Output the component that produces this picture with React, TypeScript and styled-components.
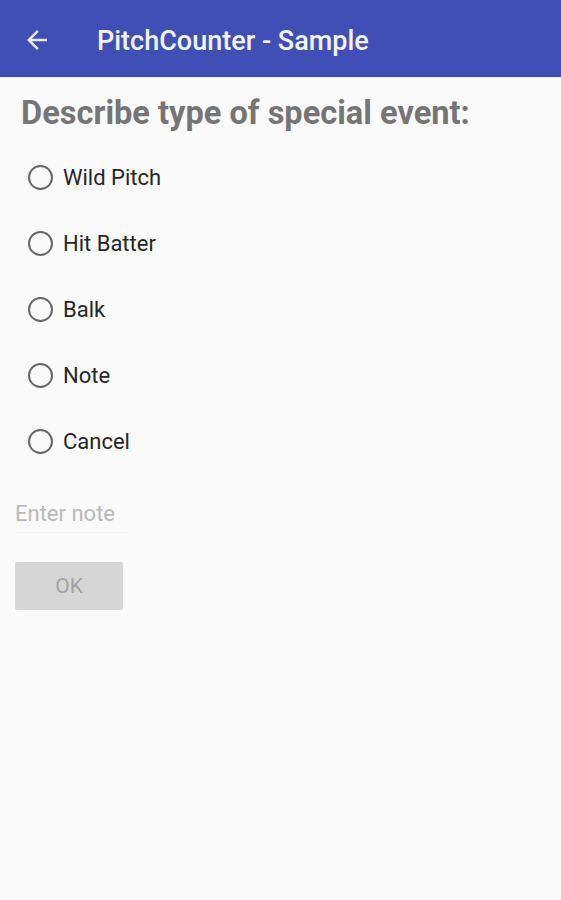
import { useState } from 'react'
import styled, { createGlobalStyle } from 'styled-components'

const GlobalStyle = createGlobalStyle`
  html, body {
    margin: 0;
    padding: 0;
    background: #fafafa;
    font-family: Roboto, "Noto Sans", sans-serif;
  }
`

const options = ['Wild Pitch', 'Hit Batter', 'Balk', 'Note', 'Cancel']

export default function App() {
  const [selected, setSelected] = useState<string | null>(null)
  const [note, setNote] = useState('')

  return (
    <Page>
      <GlobalStyle />
      <AppBar>
        <BackButton type="button" aria-label="back">
          <svg viewBox="0 0 24 24">
            <path d="M20 11H7.83l5.59-5.59L12 4l-8 8 8 8 1.41-1.41L7.83 13H20v-2z" fill="#e8eaf6" />
          </svg>
        </BackButton>
        <Title>PitchCounter - Sample</Title>
      </AppBar>
      <Content>
        <Heading>Describe type of special event:</Heading>
        <RadioList>
          {options.map((o) => (
            <RadioRow key={o} onClick={() => setSelected(o)}>
              <RadioCircle checked={selected === o} />
              <RadioLabel>{o}</RadioLabel>
            </RadioRow>
          ))}
        </RadioList>
        <NoteInput
          placeholder="Enter note"
          value={note}
          onChange={(e) => setNote(e.target.value)}
        />
        <OkButton type="button" disabled>
          OK
        </OkButton>
      </Content>
    </Page>
  )
}

const Page = styled.div`
  min-height: 900px;
  background: #fafafa;
`

const AppBar = styled.div`
  height: 77px;
  background: #3f4fb5;
  display: flex;
  align-items: center;
  padding-left: 22px;
  box-sizing: border-box;
`

const BackButton = styled.button`
  border: none;
  background: none;
  padding: 0;
  width: 30px;
  height: 30px;
  display: flex;
  align-items: center;
  justify-content: center;
  margin-right: 45px;
  margin-top: 2px;
  svg {
    width: 30px;
    height: 30px;
  }
`

const Title = styled.div`
  color: #f3f4fb;
  font-size: 27px;
  font-weight: 500;
  margin-top: 5px;
`

const Content = styled.div`
  padding-top: 12px;
`

const Heading = styled.div`
  color: #757575;
  font-size: 32.6px;
  font-weight: 700;
  margin-left: 21px;
  line-height: 48px;
`

const RadioList = styled.div`
  display: flex;
  flex-direction: column;
  margin-top: 7px;
  padding-left: 28px;
`

const RadioRow = styled.div`
  display: flex;
  align-items: center;
  height: 66px;
  cursor: pointer;
`

const RadioCircle = styled.span<{ checked: boolean }>`
  width: 21px;
  height: 21px;
  border-radius: 50%;
  border: 2.5px solid ${(p) => (p.checked ? '#3f51b5' : '#676767')};
  box-shadow: inset 0 0 0 ${(p) => (p.checked ? '4px #fafafa' : '0 transparent')};
  background: ${(p) => (p.checked ? '#3f51b5' : 'transparent')};
  flex-shrink: 0;
`

const RadioLabel = styled.span`
  margin-left: 10px;
  font-size: 22px;
  color: #262626;
`

const NoteInput = styled.input`
  display: block;
  margin: 25px 0 0 15px;
  width: 112px;
  border: none;
  border-bottom: 1px solid #f0f0f0;
  background: transparent;
  font-family: Roboto, "Noto Sans", sans-serif;
  font-size: 22px;
  padding: 2px 0 6px 0;
  color: #262626;
  outline: none;
  &::placeholder {
    color: #b9b9b9;
  }
`

const OkButton = styled.button`
  display: flex;
  align-items: center;
  justify-content: center;
  margin: 29px 0 0 15px;
  width: 108px;
  height: 48px;
  border: none;
  border-radius: 2px;
  background: #d6d6d6;
  color: #a3a3a3;
  font-family: Roboto, "Noto Sans", sans-serif;
  font-size: 21px;
  font-weight: 400;
`
